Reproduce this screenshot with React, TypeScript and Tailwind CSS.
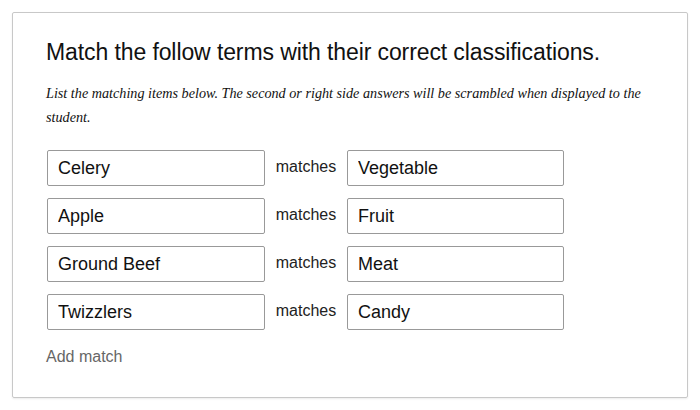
import { useState } from "react";

const initialPairs = [
  { left: "Celery", right: "Vegetable" },
  { left: "Apple", right: "Fruit" },
  { left: "Ground Beef", right: "Meat" },
  { left: "Twizzlers", right: "Candy" },
];

export default function App() {
  const [pairs, setPairs] = useState(initialPairs);

  const update = (i: number, side: "left" | "right", value: string) => {
    setPairs((prev) => prev.map((p, idx) => (idx === i ? { ...p, [side]: value } : p)));
  };

  return (
    <div className="w-[700px] h-[410px] bg-white pt-[12px] pl-[12px] font-['Liberation_Sans',Arial,sans-serif]">
      <div className="w-[676px] h-[386px] border border-[#c8c8c8] rounded-[2px] shadow-[0_1px_2px_rgba(0,0,0,0.08)] px-[33px] pt-[24px]">
        <h2 className="text-[23px] leading-[30px] text-[#111] tracking-[-0.1px]">
          Match the follow terms with their correct classifications.
        </h2>
        <p className="mt-[14px] text-[14.2px] leading-[24px] italic text-[#111] font-['Liberation_Serif','Times_New_Roman',serif]">
          List the matching items below. The second or right side answers will be scrambled when displayed to the
          student.
        </p>

        <div className="mt-[21px] flex flex-col gap-[12px]">
          {pairs.map((p, i) => (
            <div key={i} className="flex items-center">
              <input
                value={p.left}
                onChange={(e) => update(i, "left", e.target.value)}
                className="ml-[1px] w-[218px] h-[36px] border border-[#999] rounded-[2px] px-[10px] text-[18px] text-[#111] outline-none"
              />
              <span className="w-[82px] text-center text-[16px] text-[#222] -translate-y-[1px]">matches</span>
              <input
                value={p.right}
                onChange={(e) => update(i, "right", e.target.value)}
                className="w-[217px] h-[36px] border border-[#999] rounded-[2px] px-[10px] text-[18px] text-[#111] outline-none"
              />
            </div>
          ))}
        </div>

        <button
          onClick={() => setPairs((prev) => [...prev, { left: "", right: "" }])}
          className="mt-[15px] text-[16px] text-[#666]"
        >
          Add match
        </button>
      </div>
    </div>
  );
}
